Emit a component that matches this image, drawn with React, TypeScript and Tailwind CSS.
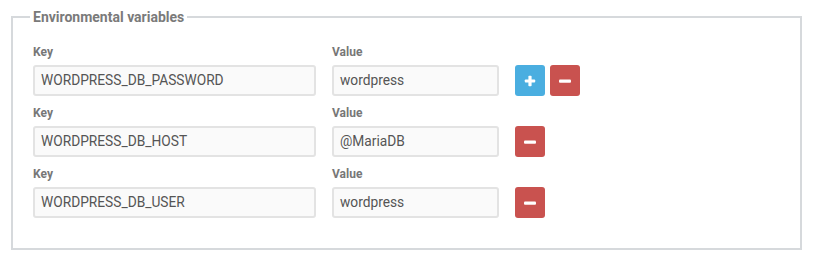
import React from "react";

type EnvVar = { key: string; value: string };

const rows: EnvVar[] = [
  { key: "WORDPRESS_DB_PASSWORD", value: "wordpress" },
  { key: "WORDPRESS_DB_HOST", value: "@MariaDB" },
  { key: "WORDPRESS_DB_USER", value: "wordpress" },
];

const PlusIcon = () => (
  <svg width="12" height="12" viewBox="0 0 12 12">
    <rect x="4.4" y="0.8" width="3.2" height="10.4" rx="0.8" fill="white" />
    <rect x="0.8" y="4.4" width="10.4" height="3.2" rx="0.8" fill="white" />
  </svg>
);

const MinusIcon = () => (
  <svg width="14" height="12" viewBox="0 0 14 12">
    <rect x="1" y="4.4" width="12" height="3.3" rx="1" fill="white" />
  </svg>
);

const App = () => {
  return (
    <div className="w-[820px] h-[258px] bg-white pt-[9px] pl-[11px] font-['Roboto',sans-serif]">
      <fieldset className="w-[791px] border-2 border-[#d6d9dc] px-[20px] pt-[19px] pb-[30px]">
        <legend className="-ml-[3px] px-[3px] text-[14px] leading-[16px] font-bold text-[#7a7a7a]">
          Environmental variables
        </legend>
        <div className="flex flex-col gap-[9px]">
          {rows.map((row, i) => (
            <div key={row.key} className="flex items-end gap-[16px]">
              <div className="flex flex-col gap-[5px]">
                <span className="text-[12px] leading-[16px] font-bold text-[#777]">Key</span>
                <div className="w-[283px] h-[31px] flex items-center px-[6px] border-2 border-[#e3e3e3] rounded-[3px] bg-[#fafafa] text-[13.75px] text-[#555]">
                  {row.key}
                </div>
              </div>
              <div className="flex flex-col gap-[5px]">
                <span className="text-[12px] leading-[16px] font-bold text-[#777]">Value</span>
                <div className="w-[167px] h-[31px] flex items-center px-[6px] border-2 border-[#e3e3e3] rounded-[3px] bg-[#fafafa] text-[13.75px] text-[#555]">
                  {row.value}
                </div>
              </div>
              <div className="flex gap-[5px]">
                {i === 0 && (
                  <button className="w-[30px] h-[31px] flex items-center justify-center rounded-[3px] bg-[#4aaee0]">
                    <PlusIcon />
                  </button>
                )}
                <button className="w-[30px] h-[31px] flex items-center justify-center rounded-[3px] bg-[#c9524f]">
                  <MinusIcon />
                </button>
              </div>
            </div>
          ))}
        </div>
      </fieldset>
    </div>
  );
};

export default App;
